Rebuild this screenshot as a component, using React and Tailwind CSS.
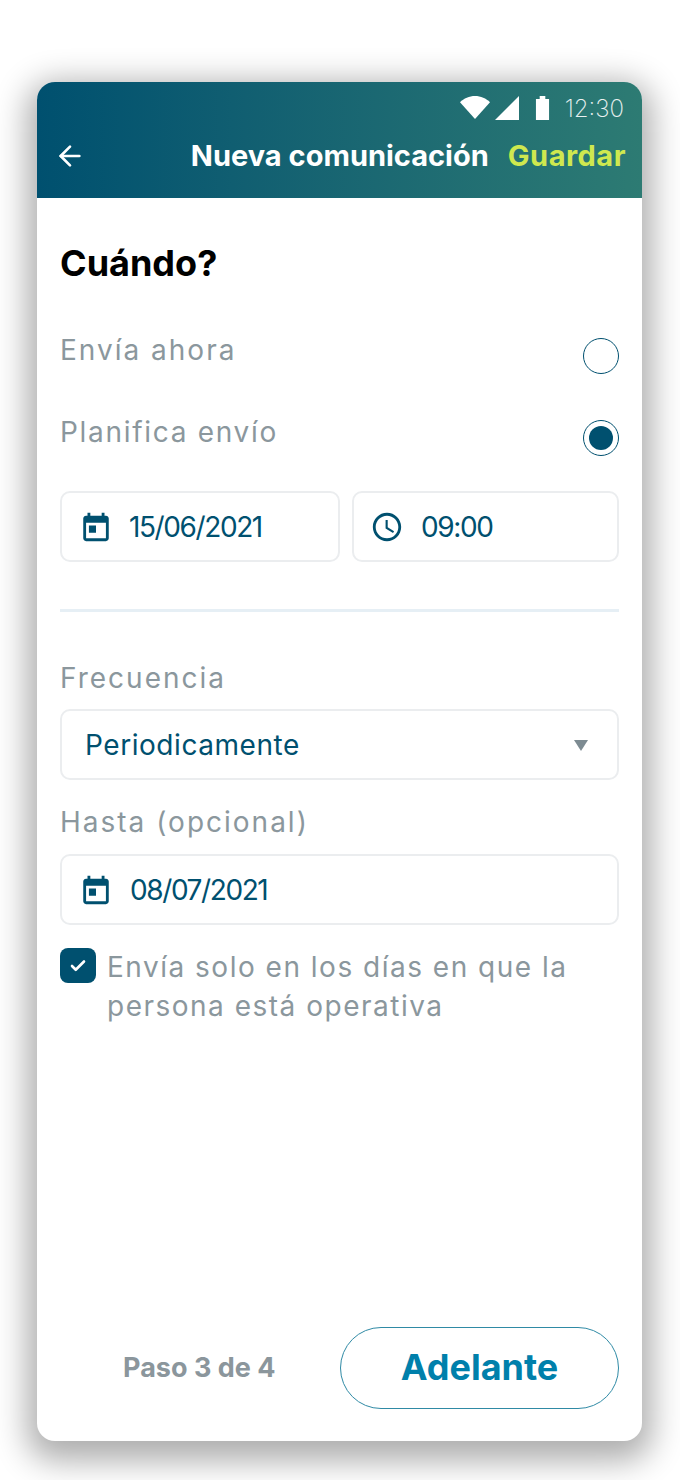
import React from 'react';
import { ArrowLeft, Check } from 'lucide-react';

const CalendarIcon = () => (
  <svg width="34" height="34" viewBox="0 0 24 24" fill="#00506f" className="flex-shrink-0">
    <path d="M19 4h-1V2h-2v2H8V2H6v2H5c-1.100 0-2 .9-2 2v14c0 1.100.9 2 2 2h14c1.100 0 2-.9 2-2V6c0-1.100-.9-2-2-2zm0 16H5V9h14v11zM7 11h5v5H7z" />
  </svg>
);

const ClockIcon = () => (
  <svg width="34" height="34" viewBox="0 0 24 24" fill="#00506f" className="flex-shrink-0">
    <path d="M11.990 2C6.470 2 2 6.480 2 12s4.470 10 9.990 10C17.520 22 22 17.520 22 12S17.520 2 11.990 2zM12 20c-4.420 0-8-3.580-8-8s3.580-8 8-8 8 3.580 8 8-3.580 8-8 8zm.5-13H11v6l5.250 3.150.75-1.230-4.500-2.670z" />
  </svg>
);

const StatusBar = () => (
  <div className="flex items-center justify-end h-[30px] pr-[18px]">
    <svg width="30" height="23" viewBox="0 0 32 24" fill="#fff" preserveAspectRatio="none" className="-mt-[3px]">
      <path d="M0 6.500C4 2.500 10 0 16 0s12 2.500 16 6.500L16 24z" />
    </svg>
    <svg width="24" height="24" viewBox="0 0 24 24" fill="#fff" className="ml-[5px] -mt-[3px]">
      <path d="M0 24L24 0v24z" />
    </svg>
    <svg width="15" height="24" viewBox="0 0 16 25" fill="#fff" preserveAspectRatio="none" className="ml-[16px] -mt-[3px]">
      <path d="M1 3h4V0h6v3h4v22H1z" />
    </svg>
    <span className="ml-[15px] text-[24px] font-extralight text-white/90 leading-none">12:30</span>
  </div>
);

const Radio = ({ checked }) => (
  <div className="w-[36px] h-[36px] rounded-full border-[1.5px] border-[#00506f] flex items-center justify-center bg-white">
    {checked && <div className="w-[24px] h-[24px] rounded-full bg-[#00506f]" />}
  </div>
);

const Field = ({ icon, value, className }) => (
  <div className={`h-[71px] flex items-center bg-white border-2 border-[#ebedef] rounded-[10px] text-[#00506f] text-[28px] tracking-[-1.4px] ${className}`}>
    {icon}
    <span>{value}</span>
  </div>
);

const App = () => {
  return (
    <div className="w-[680px] h-[1480px] bg-white pt-[82px] pl-[37px] font-['Inter','Open_Sans',sans-serif] overflow-hidden">
      <div className="w-[605px] h-[1359px] bg-white rounded-[18px] overflow-hidden flex flex-col shadow-[0_10px_32px_10px_rgba(0,0,0,0.32)]">
        {/* header */}
        <div className="h-[116px] flex-shrink-0 bg-gradient-to-r from-[#00506f] to-[#2d7b73] pt-[12px]">
          <StatusBar />
          <div className="flex items-center pl-[17px] pr-[16px] mt-[10px]">
            <ArrowLeft size={32} color="#fff" strokeWidth={2} />
            <span className="ml-auto text-white text-[29px] font-bold">Nueva comunicación</span>
            <span className="ml-[19px] text-[#cfe84f] text-[29px] font-bold tracking-[0.5px]">Guardar</span>
          </div>
        </div>

        {/* body */}
        <div className="flex-1 flex flex-col px-[23px]">
          <h1 className="mt-[41px] text-[36px] leading-[48px] font-bold text-black">Cuándo?</h1>

          <div className="mt-[40px] flex items-start justify-between h-[82px]">
            <span className="text-[28px] leading-[46px] tracking-[2px] text-[#8b979d]">Envía ahora</span>
            <div className="mt-[11px]"><Radio /></div>
          </div>
          <div className="flex items-start justify-between h-[82px]">
            <span className="text-[28px] leading-[46px] tracking-[1.7px] text-[#8b979d]">Planifica envío</span>
            <div className="mt-[11px]"><Radio checked /></div>
          </div>

          <div className="flex gap-[12px]">
            <Field className="w-[280px] pl-[17px] gap-[16px]" icon={<CalendarIcon />} value="15/06/2021" />
            <Field className="flex-1 pl-[16px] gap-[17px]" icon={<ClockIcon />} value="09:00" />
          </div>

          <div className="h-[3px] bg-[#e6eff5] mt-[47px]" />

          <div className="mt-[43px] text-[28px] leading-[46px] tracking-[2px] text-[#8b979d]">Frecuencia</div>
          <div className="mt-[8px] h-[71px] flex items-center justify-between pl-[23px] pr-[29px] border-2 border-[#ebedef] rounded-[10px] text-[#00506f] text-[28px] tracking-[0.55px]">
            <span>Periodicamente</span>
            <svg width="14" height="11" viewBox="0 0 16 13" fill="#7d8b92" preserveAspectRatio="none" className="mt-[2px]"><path d="M0 0h16L8 13z" /></svg>
          </div>

          <div className="mt-[19px] text-[28px] leading-[46px] tracking-[2px] text-[#8b979d]">Hasta (opcional)</div>
          <Field className="mt-[9px] pl-[17px] gap-[17px]" icon={<CalendarIcon />} value="08/07/2021" />

          <div className="mt-[23px] flex items-start gap-[12px]">
            <div className="w-[36px] h-[35px] flex-shrink-0 rounded-[8px] bg-[#00506f] flex items-center justify-center">
              <Check size={18} color="#fff" strokeWidth={3.5} />
            </div>
            <p className="text-[28px] leading-[39px] tracking-[1.5px] text-[#8b979d] ml-[-1px]">
              Envía solo en los días en que la persona está operativa
            </p>
          </div>

          {/* footer */}
          <div className="mt-auto mb-[32px] flex items-center">
            <span className="ml-[63px] text-[27px] font-bold text-[#8b969c]">Paso 3 de 4</span>
            <button className="ml-auto w-[279px] h-[82px] pb-[3px] rounded-full border-[1.5px] border-[#2f8aa5] text-[#0080ab] text-[36px] font-bold">
              Adelante
            </button>
          </div>
        </div>
      </div>
    </div>
  );
};

export default App;
